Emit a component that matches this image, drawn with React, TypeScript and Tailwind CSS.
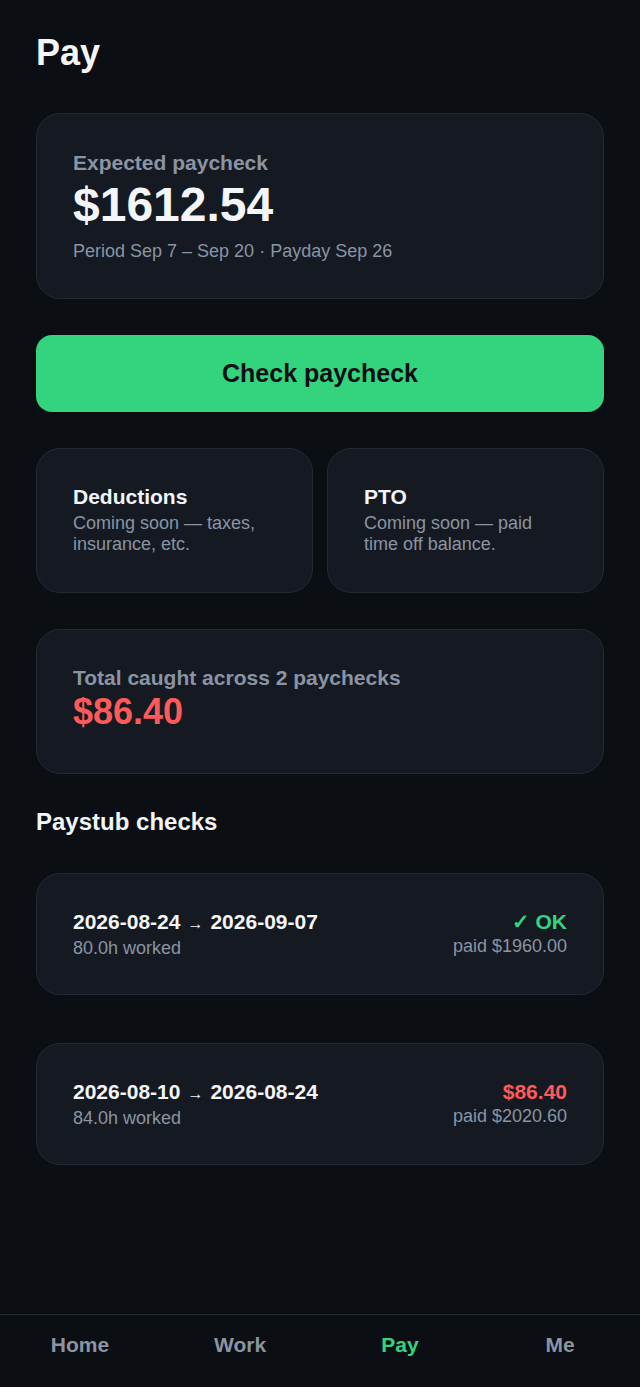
import React from "react";

const font = "font-['Liberation_Sans',Arial,sans-serif]";

function Card({ children, className = "" }: { children: React.ReactNode; className?: string }) {
  return (
    <div className={`rounded-[24px] border border-[#232a34] bg-[#151a22] ${className}`}>{children}</div>
  );
}

function StubRow({ range, hours, status, statusClass, paid }: { range: [string, string]; hours: string; status: string; statusClass: string; paid: string }) {
  return (
    <Card className="px-9 pt-[35px] pb-[34px] flex items-start justify-between">
      <div className="flex flex-col">
        <div className="text-[21px] leading-[25px] font-bold text-[#f3f5f8]">
          {range[0]}
          <span className="mx-[7px] text-[16px] font-normal">→</span>
          {range[1]}
        </div>
        <div className="text-[18px] leading-[24px] text-[#8a94a2]">{hours}</div>
      </div>
      <div className="flex flex-col items-end">
        <div className={`text-[21px] leading-[25px] font-bold ${statusClass}`}>{status}</div>
        <div className="text-[18px] leading-[24px] text-[#8a94a2]">{paid}</div>
      </div>
    </Card>
  );
}

export default function App() {
  return (
    <div className={`min-h-[1387px] bg-[#0b0e13] flex flex-col ${font}`}>
      <main className="flex-1 px-9 pt-8">
        <h1 className="text-[36px] leading-[42px] font-bold text-[#f3f5f8]">Pay</h1>

        <Card className="mt-[39px] px-9 pt-[36px] pb-[35px]">
          <div className="text-[21px] leading-[25px] font-bold text-[#8a94a2]">Expected paycheck</div>
          <div className="mt-[2px] text-[48px] leading-[56px] font-bold text-[#f3f5f8]">$1612.54</div>
          <div className="mt-[6px] text-[18px] leading-[24px] text-[#8a94a2]">Period Sep 7 – Sep 20 · Payday Sep 26</div>
        </Card>

        <button className="mt-9 w-full h-[77px] rounded-[16px] bg-[#34d47f] text-[25px] font-bold text-[#0b0e13]">
          Check paycheck
        </button>

        <div className="mt-9 grid grid-cols-2 gap-[14px]">
          <Card className="px-9 pt-[35px] h-[145px]">
            <div className="text-[21px] leading-[25px] font-bold text-[#f3f5f8]">Deductions</div>
            <div className="mt-[4px] text-[18px] leading-[21px] text-[#8a94a2]">Coming soon — taxes, insurance, etc.</div>
          </Card>
          <Card className="px-9 pt-[35px] h-[145px]">
            <div className="text-[21px] leading-[25px] font-bold text-[#f3f5f8]">PTO</div>
            <div className="mt-[4px] text-[18px] leading-[21px] text-[#8a94a2]">Coming soon — paid time off balance.</div>
          </Card>
        </div>

        <Card className="mt-9 px-9 pt-[35px] h-[145px]">
          <div className="text-[21px] leading-[25px] font-bold text-[#8a94a2]">Total caught across 2 paychecks</div>
          <div className="text-[36px] leading-[44px] font-bold text-[#ff5a5a]">$86.40</div>
        </Card>

        <h2 className="mt-[34px] text-[24px] leading-[28px] font-bold text-[#f3f5f8]">Paystub checks</h2>

        <div className="mt-[37px] flex flex-col gap-12">
          <StubRow range={["2026-08-24", "2026-09-07"]} hours="80.0h worked" status="✓ OK" statusClass="text-[#34d47f]" paid="paid $1960.00" />
          <StubRow range={["2026-08-10", "2026-08-24"]} hours="84.0h worked" status="$86.40" statusClass="text-[#ff5a5a]" paid="paid $2020.60" />
        </div>
      </main>

      <nav className="h-[73px] border-t border-[#232a34] grid grid-cols-4 pt-[17px] text-[21px] leading-[25px] font-bold">
        <div className="text-center text-[#8a94a2]">Home</div>
        <div className="text-center text-[#8a94a2]">Work</div>
        <div className="text-center text-[#34d47f]">Pay</div>
        <div className="text-center text-[#8a94a2]">Me</div>
      </nav>
    </div>
  );
}
